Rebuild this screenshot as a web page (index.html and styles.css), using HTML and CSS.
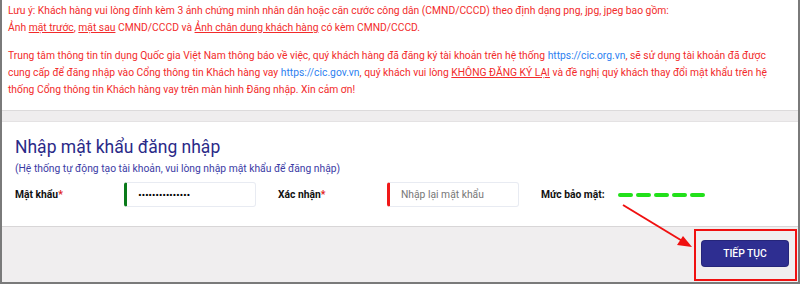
FILE: index.html
```html
<!DOCTYPE html>
<html lang="vi">
<head>
<meta charset="utf-8">
<link rel="stylesheet" href="styles.css">
</head>
<body>
<div class="frame">
  <section class="notice">
    <p>Lưu ý: Khách hàng vui lòng đính kèm 3 ảnh chứng minh nhân dân hoặc căn cước công dân (CMND/CCCD) theo định dạng png, jpg, jpeg bao gồm:<br>Ảnh <u>mặt trước</u>, <u>mặt sau</u> CMND/CCCD và <u>Ảnh chân dung khách hàng</u> có kèm CMND/CCCD.</p>
    <p>Trung tâm thông tin tín dụng Quốc gia Việt Nam thông báo về việc, quý khách hàng đã đăng ký tài khoản trên hệ thống <span class="link">https://cic.org.vn</span>, sẽ sử dụng tài khoản đã được cung cấp để đăng nhập vào Cổng thông tin Khách hàng vay <span class="link">https://cic.gov.vn</span>, quý khách vui lòng <u>KHÔNG ĐĂNG KÝ LẠI</u> và đề nghị quý khách thay đổi mật khẩu trên hệ thống Cổng thông tin Khách hàng vay trên màn hình Đăng nhập. Xin cảm ơn!</p>
  </section>
  <div class="band"></div>
  <section class="form">
    <h2 class="title">Nhập mật khẩu đăng nhập</h2>
    <div class="hint">(Hệ thống tự động tạo tài khoản, vui lòng nhập mật khẩu để đăng nhập)</div>
    <div class="row">
      <label class="lbl">Mật khẩu<span class="req">*</span></label>
      <div class="input ok"><span class="dots">···············</span></div>
      <label class="lbl lbl2">Xác nhận<span class="req">*</span></label>
      <div class="input bad"><span class="ph">Nhập lại mật khẩu</span></div>
      <label class="lbl lbl3">Mức bảo mật:</label>
      <div class="meter"><i></i><i></i><i></i><i></i><i></i></div>
    </div>
  </section>
  <footer class="foot">
    <button class="btn">TIẾP TỤC</button>
  </footer>
  <div class="highlight"></div>
  <svg class="arrow" width="800" height="284" viewBox="0 0 800 284">
    <line x1="623" y1="205" x2="684" y2="242" stroke="#f01010" stroke-width="2"/>
    <polygon points="692,247 677,245 683,236" fill="#f01010"/>
  </svg>
</div>
</body>
</html>
```
FILE: styles.css
```css
* { box-sizing: border-box; }
html, body { margin: 0; padding: 0; }
body { font-family: Roboto, "Noto Sans", sans-serif; background: #fff; }
.frame {
  position: relative;
  width: 800px;
  height: 284px;
  border-left: 2px solid #7a7a7a;
  border-right: 2px solid #7a7a7a;
  border-bottom: 2px solid #7a7a7a;
  display: flex;
  flex-direction: column;
  overflow: hidden;
}
.notice { padding: 2px 20px 0 6px; color: #f22b2b; font-size: 10.3px; line-height: 17px; height: 110px; }
.notice p { margin: 0 0 11px; }
.notice u { text-decoration-thickness: 1px; text-underline-offset: 1px; }
.link { color: #2d7ff0; }
.band { height: 12px; background: #efedee; border-top: 1px solid #dcdadb; border-bottom: 1px solid #e4e2e3; }
.form { padding: 13px 13px 0; height: 105px; border-bottom: 1px solid #d8d6d7; }
.title { margin: 0; font-weight: 400; font-size: 17.5px; line-height: 24px; color: #2a2a88; }
.hint { font-size: 10.3px; line-height: 16px; color: #3b3ba5; margin-top: 2px; }
.row { display: flex; align-items: center; margin-top: 5px; height: 25px; }
.lbl { width: 109px; font-size: 10.3px; font-weight: 700; color: #111; }
.lbl2 { margin-left: 22px; }
.lbl3 { margin-left: 22px; width: 77px; }
.req { color: #e02020; }
.input {
  width: 132px; height: 25px; border: 1px solid #e8ebf2; border-radius: 3px;
  padding-left: 11px; display: flex; align-items: center; font-size: 10.3px; color: #111;
}
.input.ok { border-left: 3px solid #0a7a1a; }
.dots { font-size: 12px; font-weight: 900; letter-spacing: -0.4px; color: #000; }
.input.bad { border-left: 3px solid #f01818; }
.ph { color: #777; font-size: 10.3px; }
.meter { display: flex; gap: 3px; }
.meter i { display: block; width: 15px; height: 4px; border-radius: 2px; background: #22e01a; }
.foot { flex: 1; background: #f0eeef; display: flex; justify-content: flex-end; align-items: flex-start; padding: 14px 10px 0 0; }
.btn {
  width: 86px; height: 25px; border: 0; border-radius: 3px; background: #2e2e91; color: #fff;
  font-family: Roboto, sans-serif; font-size: 10.3px; font-weight: 500; box-shadow: 0 0 0 1px #25257a;
}
.highlight { position: absolute; left: 692px; top: 229px; width: 103px; height: 52px; border: 2px solid #f01010; }
.arrow { position: absolute; left: -2px; top: 0; pointer-events: none; }
```
